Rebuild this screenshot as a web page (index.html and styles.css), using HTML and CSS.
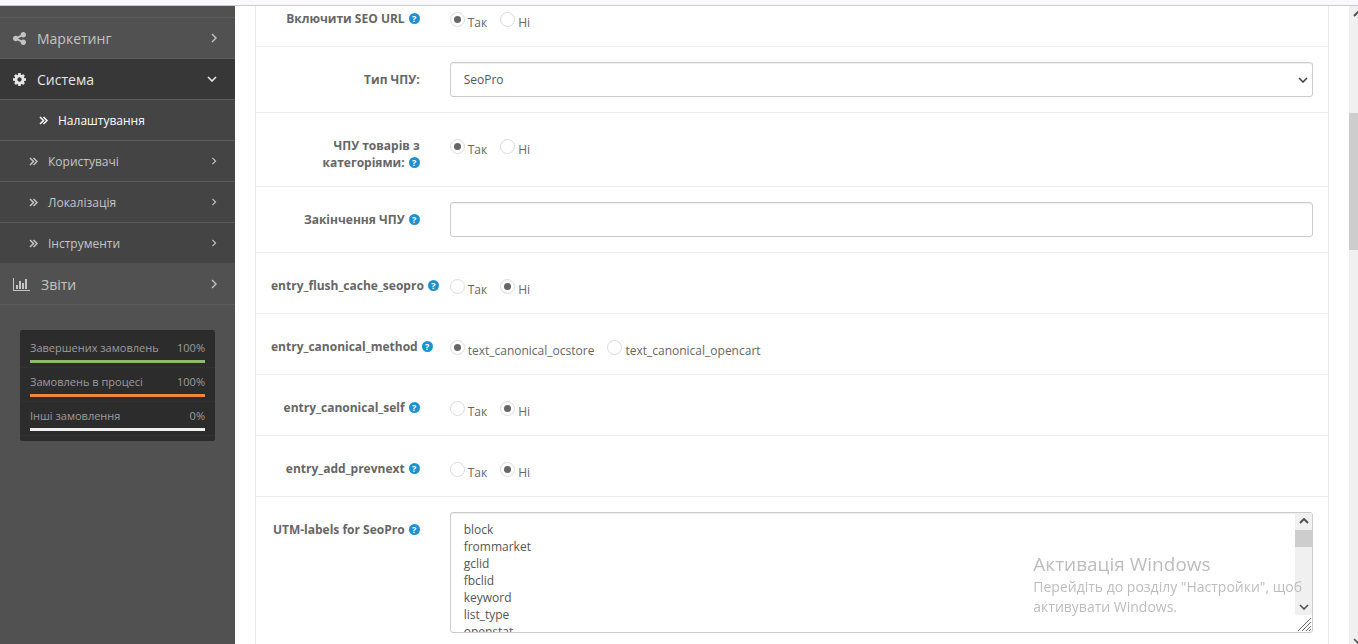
FILE: index.html
```
<!DOCTYPE html>
<html lang="uk">

<head>
    <meta charset="UTF-8">
    <meta name="viewport" content="width=device-width, initial-scale=1.0" />
    <title>Налаштування</title>
    <link rel="stylesheet" href="styles.css">
</head>

<body>
    <!-- ICONS -->
    <svg class="sprite" width="0" height="0">
        <symbol id="right" viewBox="0 0 6 10"><path d="M1 1l4 4-4 4" fill="none" stroke="currentColor" stroke-width="1.4" /></symbol>
        <symbol id="down" viewBox="0 0 10 6"><path d="M1 1l4 4 4-4" fill="none" stroke="currentColor" stroke-width="1.6" /></symbol>
        <symbol id="up" viewBox="0 0 10 6"><path d="M1 5l4-4 4 4" fill="none" stroke="currentColor" stroke-width="2" /></symbol>
        <symbol id="double" viewBox="0 0 9 9"><path d="M1 1l3.500 3.500-3.500 3.500M4.500 1l3.500 3.500-3.500 3.500" fill="none" stroke="currentColor" stroke-width="1.5" /></symbol>
    </svg>

    <div class="browser-edge"></div>

    <div class="layout">
        <!-- SIDEBAR -->
        <aside class="sidebar">
            <ul class="menu">
                <li><a class="menu-link" href="#">
                    <svg class="icon" viewBox="0 128 1536 1536"><path fill="currentColor" d="M1216 1024q133 0 226.500 93.500t93.500 226.500-93.500 226.500-226.500 93.500-226.500-93.500-93.500-226.500q0-12 2-34l-360-180q-92 86-218 86-133 0-226.500-93.500t-93.500-226.500 93.500-226.500 226.500-93.500q126 0 218 86l360-180q-2-22-2-34 0-133 93.500-226.500t226.500-93.500 226.500 93.500 93.500 226.500-93.500 226.500-226.500 93.500q-126 0-218-86l-360 180q2 22 2 34t-2 34l360 180q92-86 218-86z" /></svg>
                    Маркетинг
                    <svg class="arrow-right"><use href="#right" /></svg>
                </a></li>
                <li>
                    <a class="menu-link open" href="#">
                        <svg class="icon" viewBox="0 128 1536 1536"><path fill="currentColor" d="M1024 896q0-106-75-181t-181-75-181 75-75 181 75 181 181 75 181-75 75-181zm512-109v222q0 12-8 23t-20 13l-185 28q-19 54-39 91 35 50 107 138 10 12 10 25t-9 23q-27 37-99 108t-94 71q-12 0-26-9l-138-108q-44 23-91 38-16 136-29 186-7 28-36 28h-222q-14 0-24.500-8.500t-11.500-21.500l-28-184q-49-16-90-37l-141 107q-10 9-25 9-14 0-25-11-126-114-165-168-7-10-7-23 0-12 8-23 15-21 51-66.500t54-70.500q-27-50-41-99l-183-27q-13-2-21-12.500t-8-23.500v-222q0-12 8-23t19-13l186-28q14-46 39-92-40-57-107-138-10-12-10-24 0-10 9-23 26-36 98.500-107.500t94.500-71.500q13 0 26 10l138 107q44-23 91-38 16-136 29-186 7-28 36-28h222q14 0 24.500 8.500t11.500 21.500l28 184q49 16 90 37l142-107q9-9 24-9 13 0 25 10 129 119 165 170 7 8 7 22 0 12-8 23-15 21-51 66.500t-54 70.500q26 50 41 98l183 28q13 2 21 12.500t8 23.500z" /></svg>
                        Система
                        <svg class="arrow-down"><use href="#down" /></svg>
                    </a>
                    <ul class="submenu">
                        <li><a class="menu-link active" href="#"><svg class="double"><use href="#double" /></svg>Налаштування</a></li>
                        <li><a class="menu-link" href="#"><svg class="double"><use href="#double" /></svg>Користувачі<svg class="arrow-right"><use href="#right" /></svg></a></li>
                        <li><a class="menu-link" href="#"><svg class="double"><use href="#double" /></svg>Локалізація<svg class="arrow-right"><use href="#right" /></svg></a></li>
                        <li><a class="menu-link" href="#"><svg class="double"><use href="#double" /></svg>Інструменти<svg class="arrow-right"><use href="#right" /></svg></a></li>
                    </ul>
                </li>
                <li><a class="menu-link" href="#">
                    <svg class="icon-chart" viewBox="0 0 17 13"><path fill="currentColor" d="M0 0h1v12h16v1H0zM3 7h2v4H3zM6 3h2v8H6zM9 5h2v6H9zM12 1h2v10h-2z" /></svg>
                    Звіти
                    <svg class="arrow-right"><use href="#right" /></svg>
                </a></li>
            </ul>

            <!-- STATS -->
            <ul class="stats">
                <li>
                    <div class="stats-text">Завершених замовлень <span>100%</span></div>
                    <div class="bar green"></div>
                </li>
                <li>
                    <div class="stats-text">Замовлень в процесі <span>100%</span></div>
                    <div class="bar orange"></div>
                </li>
                <li>
                    <div class="stats-text">Інші замовлення <span>0%</span></div>
                    <div class="bar white"></div>
                </li>
            </ul>
        </aside>

        <!-- SETTINGS FORM -->
        <main class="content">
            <form class="panel">
                <div class="form-group">
                    <div class="label" id="l-url">Включити SEO <span class="nowrap">URL<span class="help">?</span></span></div>
                    <div class="field radios" role="radiogroup" aria-labelledby="l-url">
                        <label><input type="radio" name="seo_url" checked><span>Так</span></label>
                        <label><input type="radio" name="seo_url"><span>Ні</span></label>
                    </div>
                </div>
                <div class="form-group">
                    <label class="label" for="type">Тип ЧПУ:</label>
                    <div class="field">
                        <select class="form-control" id="type">
                            <option>SeoPro</option>
                        </select>
                        <svg class="select-arrow"><use href="#down" /></svg>
                    </div>
                </div>
                <div class="form-group">
                    <div class="label" id="l-cat">ЧПУ товарів з <span class="nowrap">категоріями:<span class="help">?</span></span></div>
                    <div class="field radios" role="radiogroup" aria-labelledby="l-cat">
                        <label><input type="radio" name="category" checked><span>Так</span></label>
                        <label><input type="radio" name="category"><span>Ні</span></label>
                    </div>
                </div>
                <div class="form-group">
                    <label class="label" for="postfix">Закінчення <span class="nowrap">ЧПУ<span class="help">?</span></span></label>
                    <div class="field">
                        <input class="form-control" type="text" id="postfix">
                    </div>
                </div>
                <div class="form-group">
                    <div class="label" id="l-flush"><span class="nowrap">entry_flush_cache_seopro<span class="help">?</span></span></div>
                    <div class="field radios" role="radiogroup" aria-labelledby="l-flush">
                        <label><input type="radio" name="flush"><span>Так</span></label>
                        <label><input type="radio" name="flush" checked><span>Ні</span></label>
                    </div>
                </div>
                <div class="form-group">
                    <div class="label" id="l-method"><span class="nowrap">entry_canonical_method<span class="help">?</span></span></div>
                    <div class="field radios" role="radiogroup" aria-labelledby="l-method">
                        <label><input type="radio" name="method" checked><span>text_canonical_ocstore</span></label>
                        <label><input type="radio" name="method"><span>text_canonical_opencart</span></label>
                    </div>
                </div>
                <div class="form-group">
                    <div class="label" id="l-self"><span class="nowrap">entry_canonical_self<span class="help">?</span></span></div>
                    <div class="field radios" role="radiogroup" aria-labelledby="l-self">
                        <label><input type="radio" name="self"><span>Так</span></label>
                        <label><input type="radio" name="self" checked><span>Ні</span></label>
                    </div>
                </div>
                <div class="form-group">
                    <div class="label" id="l-prev"><span class="nowrap">entry_add_prevnext<span class="help">?</span></span></div>
                    <div class="field radios" role="radiogroup" aria-labelledby="l-prev">
                        <label><input type="radio" name="prevnext"><span>Так</span></label>
                        <label><input type="radio" name="prevnext" checked><span>Ні</span></label>
                    </div>
                </div>
                <div class="form-group">
                    <label class="label" for="utm">UTM-labels for <span class="nowrap">SeoPro<span class="help">?</span></span></label>
                    <div class="field">
                        <div class="textarea-box">
                            <textarea class="form-control" id="utm" rows="6">block
frommarket
gclid
fbclid
keyword
list_type
openstat</textarea>
                            <div class="textarea-scroll">
                                <svg class="scroll-arrow"><use href="#up" /></svg>
                                <div class="textarea-thumb"></div>
                                <svg class="scroll-arrow last"><use href="#down" /></svg>
                            </div>
                            <svg class="resizer" viewBox="0 0 15 15"><path d="M1 14L14 1M5 14l9-9M9 14l5-5M12 14l2-2" stroke="#666" fill="none" /></svg>
                        </div>
                    </div>
                </div>
            </form>
        </main>

        <!-- PAGE SCROLLBAR -->
        <div class="page-scroll">
            <svg class="scroll-arrow"><use href="#up" /></svg>
            <div class="page-thumb"></div>
            <svg class="scroll-arrow last"><use href="#down" /></svg>
        </div>
    </div>

    <!-- WINDOWS NOTICE -->
    <div class="notice">
        <div class="notice-title">Активація Windows</div>
        <div>Перейдіть до розділу "Настройки", щоб<br>активувати Windows.</div>
    </div>
</body>

</html>
```
FILE: styles.css
```
* {
    box-sizing: border-box;
}

body {
    display: flex;
    flex-direction: column;
    height: 100vh;
    margin: 0;
    overflow: hidden;
    background-color: #fff;
    color: #666;
    font-family: "Open Sans", "Noto Sans", sans-serif;
    font-size: 12px;
    line-height: 17px;
}

ul {
    list-style-type: none;
    margin: 0;
    padding: 0;
}

.sprite {
    position: absolute;
}

.browser-edge {
    flex: none;
    height: 6px;
    background-color: #f9f9fb;
    border-bottom: 1px solid #ccc;
}

.layout {
    display: flex;
    flex: 1;
    min-height: 0;
}

/* SIDEBAR */
.sidebar {
    flex: none;
    width: 235px;
    padding-top: 11px;
    background-color: #515151;
}

.menu {
    border-top: 1px solid #5c5c5c;
}

.menu-link {
    display: flex;
    align-items: center;
    gap: 11px;
    height: 41px;
    padding: 0 18px 0 13px;
    border-bottom: 1px solid #5c5c5c;
    color: #c4c4c4;
    font-size: 14px;
    text-decoration: none;
}

.menu-link.open {
    background-color: #373737;
    color: #e6e6e6;
}

.submenu .menu-link {
    gap: 10px;
    padding-left: 29px;
    background-color: #444;
    font-size: 12px;
}

.submenu .menu-link.active {
    padding-left: 39px;
    color: #fff;
}

.submenu li:last-child .menu-link {
    border-bottom-color: #515151;
}

.icon {
    width: 13px;
    height: 13px;
}

.icon-chart {
    width: 17px;
    height: 13px;
}

.double {
    width: 9px;
    height: 9px;
}

.arrow-right {
    width: 6px;
    height: 10px;
    margin-left: auto;
}

.submenu .arrow-right {
    height: 8px;
}

.arrow-down {
    width: 10px;
    height: 6px;
    margin-left: auto;
}

.stats {
    margin: 25px 20px 0;
    padding: 4px 0 5px;
    background-color: #2c2c2c;
    border-radius: 2px;
    color: #9d9d9d;
    font-size: 11px;
    line-height: 16px;
}

.stats li {
    padding: 6px 10px 4px;
    border-bottom: 1px dotted #373737;
}

.stats-text {
    display: flex;
    justify-content: space-between;
    margin-bottom: 4px;
}

.bar {
    height: 3px;
}

.green {
    background-color: #8fbb6c;
}

.orange {
    background-color: #f38733;
}

.white {
    background-color: #f0f0f0;
}

/* FORM */
.content {
    flex: 1;
    display: flex;
    min-width: 0;
    padding: 0 20px;
    overflow: hidden;
}

.panel {
    flex: 1;
    min-width: 0;
    margin-top: -21px;
    border: 1px solid #e8e8e8;
    border-width: 0 1px;
}

.form-group {
    display: flex;
    padding: 15px 0;
    border-top: 1px solid #ededed;
}

.label {
    flex: none;
    width: 16.667%;
    padding: 9px 15px 0;
    font-weight: bold;
    text-align: right;
}

.nowrap {
    white-space: nowrap;
}

.help {
    display: inline-block;
    width: 11px;
    height: 11px;
    margin-left: 4px;
    border-radius: 50%;
    background-color: #1e91cf;
    color: #fff;
    font-size: 9px;
    line-height: 11px;
    text-align: center;
    vertical-align: 1px;
}

.field {
    position: relative;
    flex: 1;
    min-width: 0;
    padding: 0 15px;
}

.form-control {
    display: block;
    width: 100%;
    height: 35px;
    margin: 0;
    padding: 8px 13px;
    border: 1px solid #ccc;
    border-radius: 3px;
    background-color: #fff;
    box-shadow: inset 0 1px 1px rgba(0, 0, 0, 0.075);
    color: #555;
    font-family: inherit;
    font-size: 12px;
    line-height: 17px;
    appearance: none;
}

.select-arrow {
    position: absolute;
    top: 15px;
    right: 20px;
    width: 10px;
    height: 6px;
    color: #444;
}

.radios {
    display: flex;
    gap: 13px;
    padding-top: 11px;
}

.radios label {
    display: flex;
    align-items: flex-start;
    gap: 3px;
}

.radios span {
    padding-top: 2px;
}

.radios input {
    display: grid;
    place-items: center;
    width: 15px;
    height: 15px;
    margin: 0;
    border: 1px solid #dcdcdc;
    border-radius: 50%;
    appearance: none;
}

.radios input:checked::after {
    content: "";
    width: 7px;
    height: 7px;
    border-radius: 50%;
    background-color: #666;
}

.textarea-box {
    position: relative;
}

textarea.form-control {
    height: 121px;
    overflow: hidden;
    resize: none;
}

.textarea-scroll {
    position: absolute;
    top: 1px;
    right: 1px;
    bottom: 18px;
    display: flex;
    flex-direction: column;
    align-items: center;
    width: 17px;
    padding: 5px 0;
    background-color: #f0f0f0;
}

.textarea-thumb {
    width: 17px;
    height: 17px;
    margin-top: 6px;
    background-color: #cdcdcd;
}

.scroll-arrow {
    flex: none;
    width: 10px;
    height: 6px;
    color: #505050;
}

.scroll-arrow.last {
    margin-top: auto;
}

.resizer {
    position: absolute;
    right: 1px;
    bottom: 1px;
    width: 15px;
    height: 15px;
}

/* SCROLLBAR */
.page-scroll {
    flex: none;
    display: flex;
    flex-direction: column;
    width: 9px;
    padding: 5px 0 0 4px;
    overflow: hidden;
    background-color: #f0f0f0;
}

.page-thumb {
    flex: none;
    width: 17px;
    height: 137px;
    margin: 96px 0 0 -4px;
    background-color: #cdcdcd;
}

/* NOTICE */
.notice {
    position: fixed;
    right: 56px;
    bottom: 27px;
    color: #bdbdbd;
    font-size: 14px;
    line-height: 20px;
    pointer-events: none;
}

.notice-title {
    font-size: 19px;
    line-height: 26px;
}
```
